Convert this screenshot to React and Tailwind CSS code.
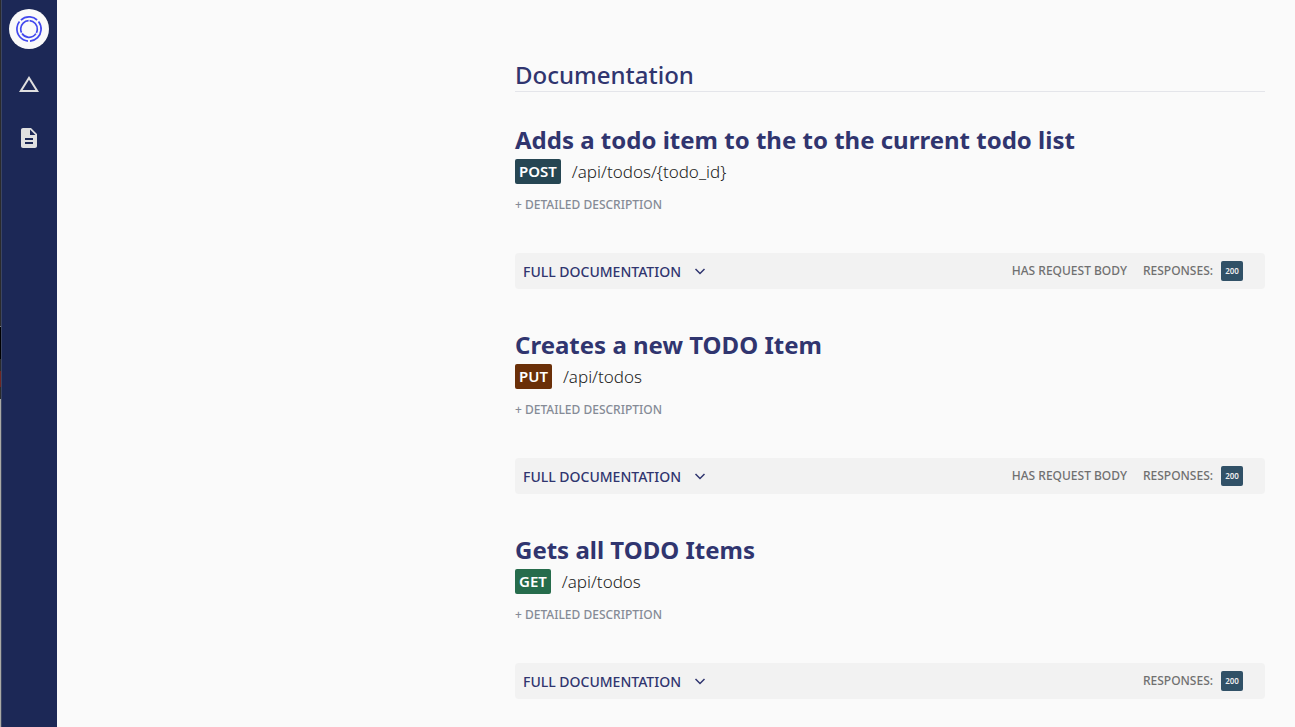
import React from "react";

const endpoints = [
  { title: "Adds a todo item to the to the current todo list", method: "POST", path: "/api/todos/{todo_id}", color: "bg-[#264653]", body: true },
  { title: "Creates a new TODO Item", method: "PUT", path: "/api/todos", color: "bg-[#6a2f08]", body: true },
  { title: "Gets all TODO Items", method: "GET", path: "/api/todos", color: "bg-[#266c4c]", body: false },
];

function Logo() {
  return (
    <svg viewBox="0 0 40 40" className="h-10 w-10" fill="none" stroke="#4248ee" strokeWidth="1.7" aria-hidden="true">
      <circle cx="20" cy="20" r="12.1" pathLength="360" strokeDasharray="123 10 84 10 123 10" transform="rotate(95 20 20)" />
      <circle cx="20" cy="20" r="8.3" pathLength="360" strokeDasharray="113 7" transform="rotate(274 20 20)" />
    </svg>
  );
}

function Endpoint({ title, method, path, color, body }) {
  return (
    <article>
      <h2 className="text-2xl leading-8 font-bold text-[#30356f]">{title}</h2>
      <div className="mt-[3px] flex items-center gap-[11px]">
        <span className={`rounded-xs px-1 text-[15px] leading-[25px] font-semibold text-white ${color}`}>{method}</span>
        <span className="text-[17px] leading-[25px] font-light text-[#222]">{path}</span>
      </div>
      <button type="button" className="mt-[13px] block text-xs leading-4 font-medium text-[#858b96]">+ DETAILED DESCRIPTION</button>
      <div className="mt-10 flex h-9 items-center justify-between rounded-sm bg-[#f2f2f2] pr-[22px] pl-2">
        <button type="button" className="flex items-center gap-[13px] pt-0.5 text-sm font-medium text-[#30356f]">
          FULL DOCUMENTATION
          <svg viewBox="0 0 12 12" className="h-3 w-3" fill="none" stroke="currentColor" strokeWidth="1.5" aria-hidden="true">
            <path d="M1.5 3 6 7.5 10.5 3" />
          </svg>
        </button>
        <div className="flex items-center gap-4 text-xs font-medium text-[#707070]">
          {body && <span>HAS REQUEST BODY</span>}
          <span className="flex items-center gap-2">
            RESPONSES:
            <span className="w-[22px] rounded-xs bg-[#315167] text-center text-[8px] leading-5 font-semibold text-[#eee]">200</span>
          </span>
        </div>
      </div>
    </article>
  );
}

function WindowEdge() {
  return (
    <div aria-hidden="true" className="flex w-px shrink-0 flex-col bg-[#a9a9a5]">
      <div className="h-[326px] bg-[#2b2b2b]" />
      <div className="h-px bg-[#777]" />
      <div className="h-8 bg-black" />
      <div className="h-3 bg-[#2b2b2b]" />
      <div className="h-4 bg-[#6e2622]" />
      <div className="h-3 bg-[#2b2b2b]" />
    </div>
  );
}

export default function App() {
  return (
    <div className="flex min-h-screen bg-[#fafafa] font-['Noto_Sans',sans-serif]">
      <WindowEdge />
      <nav aria-label="Main" className="flex w-14 shrink-0 flex-col items-center border-x border-r-[#1c2856] border-l-[#3b4563] bg-[#1c2856] pt-[9px]">
        <a href="#home" aria-label="Home" className="block h-10 w-10 rounded-full bg-[#fafafa]"><Logo /></a>
        <a href="#changes" aria-label="Changes" className="mt-[23px] block">
          <svg viewBox="0 0 24 24" className="h-6 w-6" fill="#e0e0e0" aria-hidden="true"><path d="M12 7.77 18.39 18H5.61L12 7.77M12 4 2 20h20L12 4z" /></svg>
        </a>
        <a href="#docs" aria-label="Documentation" className="mt-[30px] block">
          <svg viewBox="0 0 24 24" className="h-6 w-6" fill="#e0e0e0" aria-hidden="true"><path d="M14 2H6c-1.1 0-1.99.9-1.99 2L4 20c0 1.1.89 2 1.99 2H18c1.1 0 2-.9 2-2V8l-6-6zm2 16H8v-2h8v2zm0-4H8v-2h8v2zm-3-5V3.5L18.5 9H13z" /></svg>
        </a>
      </nav>
      <main className="flex-1 pt-[59px] pr-[30px]">
        <div className="ml-auto max-w-[750px]">
          <h1 className="border-b border-[#e4e5ea] pb-px text-2xl leading-[31px] font-medium text-[#30356f]">Documentation</h1>
          <div className="mt-8 flex flex-col gap-10">
            {endpoints.map((e) => <Endpoint key={e.title} {...e} />)}
          </div>
        </div>
      </main>
    </div>
  );
}
